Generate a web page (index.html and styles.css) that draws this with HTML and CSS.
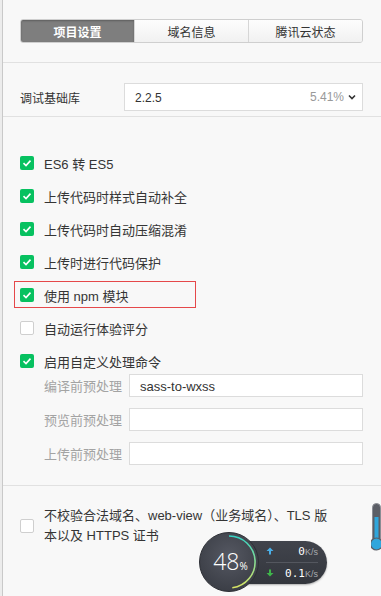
FILE: index.html
```html
<!DOCTYPE html>
<html>

<head>
    <meta charset="utf-8">
    <title>项目设置</title>
    <link rel="stylesheet" href="styles.css">
</head>

<body>
    <div class="app">
        <div class="side"></div>
        <div class="panel">
            <div class="section tabs-wrap">
                <div class="tabs">
                    <div class="tab active">项目设置</div>
                    <div class="tab">域名信息</div>
                    <div class="tab">腾讯云状态</div>
                </div>
            </div>

            <div class="section lib">
                <span class="lib-label">调试基础库</span>
                <div class="select">
                    <span class="ver">2.2.5</span>
                    <span class="pct">5.41%</span>
                    <svg class="chev" width="8" height="6" viewBox="0 0 8 6">
                        <polyline points="1,1.5 4,4.5 7,1.5" fill="none" stroke="#333" stroke-width="1.6" />
                    </svg>
                </div>
            </div>

            <div class="section opts">
                <div class="opt"><span class="box on"><svg viewBox="0 0 14 14"><polyline points="3.5,7.2 6,9.6 10.5,4.6" /></svg></span>ES6 转 ES5</div>
                <div class="opt"><span class="box on"><svg viewBox="0 0 14 14"><polyline points="3.5,7.2 6,9.6 10.5,4.6" /></svg></span>上传代码时样式自动补全</div>
                <div class="opt"><span class="box on"><svg viewBox="0 0 14 14"><polyline points="3.5,7.2 6,9.6 10.5,4.6" /></svg></span>上传代码时自动压缩混淆</div>
                <div class="opt"><span class="box on"><svg viewBox="0 0 14 14"><polyline points="3.5,7.2 6,9.6 10.5,4.6" /></svg></span>上传时进行代码保护</div>
                <div class="opt marked"><span class="box on"><svg viewBox="0 0 14 14"><polyline points="3.5,7.2 6,9.6 10.5,4.6" /></svg></span>使用 npm 模块</div>
                <div class="opt"><span class="box"></span>自动运行体验评分</div>
                <div class="opt"><span class="box on"><svg viewBox="0 0 14 14"><polyline points="3.5,7.2 6,9.6 10.5,4.6" /></svg></span>启用自定义处理命令</div>

                <div class="subs">
                    <div class="sub">
                        <span class="sub-label">编译前预处理</span>
                        <div class="field">sass-to-wxss</div>
                    </div>
                    <div class="sub">
                        <span class="sub-label">预览前预处理</span>
                        <div class="field"></div>
                    </div>
                    <div class="sub">
                        <span class="sub-label">上传前预处理</span>
                        <div class="field"></div>
                    </div>
                </div>
            </div>

            <div class="section last">
                <div class="opt multi"><span class="box"></span><span class="opt-text">不校验合法域名、web-view（业务域名）、TLS 版本以及 HTTPS 证书</span></div>
            </div>
        </div>

        <!-- floating performance widget -->
        <div class="gauge">
            <div class="dial">
                <svg width="60" height="60" viewBox="0 0 60 60">
                    <defs>
                        <radialGradient id="face" cx="50%" cy="40%" r="60%">
                            <stop offset="0" stop-color="#555862" />
                            <stop offset="1" stop-color="#3b3e46" />
                        </radialGradient>
                        <linearGradient id="arc" x1="0" y1="0" x2="0" y2="1">
                            <stop offset="0" stop-color="#35d3c4" />
                            <stop offset="1" stop-color="#d8e463" />
                        </linearGradient>
                    </defs>
                    <circle cx="30" cy="30" r="29.5" fill="url(#face)" stroke="#2e3036" />
                    <path d="M30 4 A26 26 0 0 1 33.3 55.8" fill="none" stroke="url(#arc)" stroke-width="1.6" />
                </svg>
                <span class="num">48<small>%</small></span>
            </div>
            <div class="net">
                <div class="net-row">
                    <svg class="arrow" width="8" height="8" viewBox="0 0 8 8">
                        <path d="M4 0.5 L7.5 4 L5 4 L5 7.5 L3 7.5 L3 4 L0.5 4 Z" fill="#4aaee6" />
                    </svg>
                    <span class="speed">0<small>K/s</small></span>
                </div>
                <div class="net-row">
                    <svg class="arrow" width="8" height="8" viewBox="0 0 8 8">
                        <path d="M4 7.5 L7.5 4 L5 4 L5 0.5 L3 0.5 L3 4 L0.5 4 Z" fill="#3fb54a" />
                    </svg>
                    <span class="speed">0.1<small>K/s</small></span>
                </div>
            </div>
        </div>

        <svg class="thermo" width="12" height="60" viewBox="0 0 12 60">
            <rect x="1.5" y="0.5" width="8" height="46" rx="4" fill="#5b5e66" stroke="#8a8d94" />
            <rect x="3.5" y="14" width="4" height="32" fill="#2fa6dc" />
            <circle cx="5.5" cy="41" r="6" fill="#2fa6dc" stroke="#5b5e66" stroke-width="1.2" />
        </svg>
    </div>
</body>

</html>
```

FILE: styles.css
```css
html,
body {
    margin: 0;
    height: 100%;
    overflow: hidden;
}

body {
    font-family: "Liberation Sans", "Noto Sans CJK SC", sans-serif;
    color: #333;
    background: #f8f8f8;
}

.app {
    position: relative;
    display: flex;
    height: 100%;
}

.side {
    width: 2px;
    background: #ececec;
    border-right: 1px solid #c9c9c9;
}

.panel {
    flex: 1;
    background: #f8f8f8;
}

.section {
    padding: 0 18px 0 17px;
    border-bottom: 1px solid #e1e1e1;
}

/* Tabs */

.tabs-wrap {
    padding-top: 19px;
    padding-bottom: 19px;
}

.tabs {
    display: flex;
    height: 24px;
    border: 1px solid #cfcfcf;
    border-radius: 3px;
    overflow: hidden;
    box-sizing: border-box;
}

.tab {
    flex: 1;
    display: flex;
    align-items: center;
    justify-content: center;
    font-size: 12px;
    color: #333;
    background: linear-gradient(#fdfdfd, #f1f1f1);
    border-left: 1px solid #d6d6d6;
}

.tab:first-child {
    border-left: 0;
}

.tab.active {
    color: #fff;
    font-weight: bold;
    background: #7e7e7e;
    box-shadow: inset 0 1px 2px rgba(0, 0, 0, .25);
}

/* Base library */

.lib {
    display: flex;
    align-items: center;
    padding-top: 20px;
    padding-bottom: 5px;
}

.lib-label {
    width: 104px;
    font-size: 12px;
}

.select {
    flex: 1;
    display: flex;
    align-items: center;
    height: 28px;
    box-sizing: border-box;
    padding: 0 6px 0 10px;
    background: #fff;
    border: 1px solid #dcdcdc;
    font-size: 12px;
}

.ver {
    flex: 1;
    padding-top: 2px;
}

.pct {
    color: #999;
    margin-right: 4px;
}

/* Options */

.opts {
    padding-top: 36px;
    padding-bottom: 20px;
}

.opt {
    position: relative;
    display: flex;
    align-items: center;
    height: 20px;
    margin-bottom: 13px;
    font-size: 13px;
    color: #353535;
}

.opt:nth-child(7) {
    margin-bottom: 0;
}

.marked:after {
    content: '';
    position: absolute;
    left: -6px;
    top: -4px;
    width: 182px;
    height: 27px;
    box-sizing: border-box;
    border: 1px solid #e5484a;
}

.box {
    flex: none;
    width: 14px;
    height: 14px;
    margin-right: 10px;
    box-sizing: border-box;
    border: 1px solid #cfcfcf;
    border-radius: 2px;
    background: #fff;
}

.box.on {
    border: 0;
    background: #07c160;
}

.box svg {
    display: block;
    width: 14px;
    height: 14px;
    fill: none;
    stroke: #fff;
    stroke-width: 1.6;
}

.subs {
    margin-top: 3px;
    padding-left: 24px;
}

.sub {
    display: flex;
    align-items: center;
    margin-bottom: 11px;
}

.sub:last-child {
    margin-bottom: 0;
}

.sub-label {
    width: 85px;
    font-size: 13px;
    color: #a3a3a3;
}

.field {
    flex: 1;
    height: 23px;
    line-height: 23px;
    box-sizing: border-box;
    padding-left: 10px;
    background: #fff;
    border: 1px solid #dcdcdc;
    font-size: 13px;
    color: #333;
}

/* Last option */

.last {
    border-bottom: 0;
    padding-top: 20px;
    padding-right: 46px;
}

.opt.multi {
    height: auto;
    line-height: 20px;
}

/* Floating widgets */

.gauge {
    position: absolute;
    left: 199px;
    top: 532px;
    display: flex;
    align-items: center;
}

.dial {
    position: relative;
    z-index: 2;
    width: 60px;
    height: 60px;
}

.dial svg {
    display: block;
}

.num {
    position: absolute;
    left: 0;
    right: 0;
    top: 16px;
    text-align: center;
    font-family: "Open Sans", sans-serif;
    font-weight: 300;
    font-size: 23px;
    line-height: 26px;
    color: #fff;
    padding-left: 3px;
}

.num small {
    font-size: 10px;
    font-weight: 400;
}

.net {
    margin-left: -18px;
    width: 86px;
    height: 43px;
    box-sizing: border-box;
    padding: 0 9px 0 25px;
    background: linear-gradient(#41444c, #33363d);
    border-radius: 0 22px 22px 0;
    box-shadow: 0 1px 2px rgba(0, 0, 0, .3);
}

.net-row {
    display: flex;
    align-items: center;
    height: 21px;
    font-family: "DejaVu Sans Mono", monospace;
    font-size: 11px;
    color: #fff;
}

.net-row:first-child {
    border-bottom: 1px solid #54575f;
}

.arrow {
    flex: none;
}

.speed {
    flex: 1;
    text-align: right;
}

.speed small {
    font-family: "Liberation Sans", sans-serif;
    font-size: 9px;
    color: #a9abb0;
}

.thermo {
    position: absolute;
    left: 371px;
    top: 503px;
}
```
